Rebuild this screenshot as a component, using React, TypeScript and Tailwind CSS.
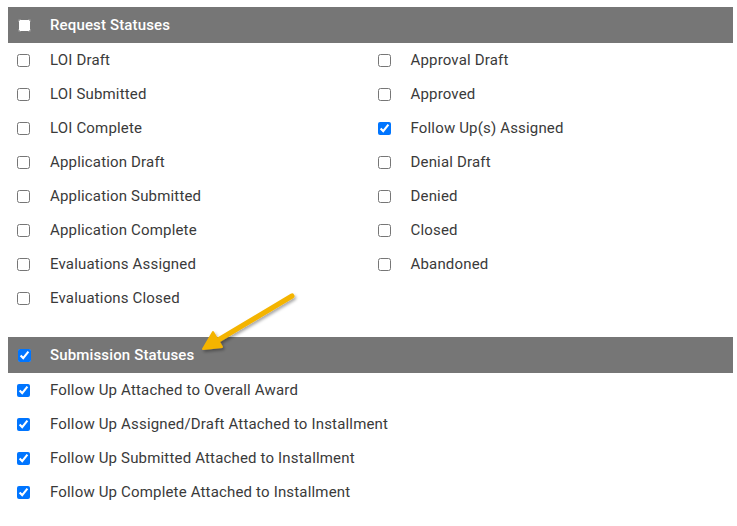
import React from 'react'

const requestLeft = [
  'LOI Draft',
  'LOI Submitted',
  'LOI Complete',
  'Application Draft',
  'Application Submitted',
  'Application Complete',
  'Evaluations Assigned',
  'Evaluations Closed',
]

const requestRight = [
  { label: 'Approval Draft', checked: false },
  { label: 'Approved', checked: false },
  { label: 'Follow Up(s) Assigned', checked: true },
  { label: 'Denial Draft', checked: false },
  { label: 'Denied', checked: false },
  { label: 'Closed', checked: false },
  { label: 'Abandoned', checked: false },
]

const submission = [
  'Follow Up Attached to Overall Award',
  'Follow Up Assigned/Draft Attached to Installment',
  'Follow Up Submitted Attached to Installment',
  'Follow Up Complete Attached to Installment',
]

const Row: React.FC<{ label: string; checked?: boolean }> = ({ label, checked }) => (
  <label className="flex h-[34px] items-center">
    <input type="checkbox" defaultChecked={checked} className="h-[13px] w-[13px] shrink-0" />
    <span className="ml-[20px] text-[15px] tracking-[0.17px] text-[#3a3a3a]">{label}</span>
  </label>
)

const Header: React.FC<{ title: string; checked?: boolean }> = ({ title, checked }) => (
  <div className="flex h-[36px] items-center bg-[#767676] pl-[10px]">
    <input type="checkbox" defaultChecked={checked} className="h-[13px] w-[13px] shrink-0" />
    <span className="ml-[19px] text-[15px] font-medium tracking-[0.15px] text-white">{title}</span>
  </div>
)

export default function App() {
  return (
    <div className="relative h-[526px] w-[737px] bg-white pl-2 pr-1 pt-[7px] font-['Roboto',sans-serif]">
      <Header title="Request Statuses" />
      <div className="grid grid-cols-2">
        <div className="pl-[9px]">
          {requestLeft.map((l) => (
            <Row key={l} label={l} />
          ))}
        </div>
        <div className="pl-[7px]">
          {requestRight.map((r) => (
            <Row key={r.label} label={r.label} checked={r.checked} />
          ))}
        </div>
      </div>
      <div className="h-[22px]" />
      <Header title="Submission Statuses" checked />
      <div className="pl-[9px]">
        {submission.map((s) => (
          <Row key={s} label={s} checked />
        ))}
      </div>

      <svg className="pointer-events-none absolute left-0 top-0" width="737" height="526">
        <defs>
          <filter id="sh" x="-20%" y="-20%" width="140%" height="140%">
            <feDropShadow dx="1.5" dy="2" stdDeviation="1.5" floodColor="#000" floodOpacity="0.35" />
          </filter>
        </defs>
        <g filter="url(#sh)">
          <line x1="292" y1="296" x2="215" y2="342" stroke="#F4B400" strokeWidth="5" strokeLinecap="round" />
          <polygon points="203,349 213,332 222,347" fill="#F4B400" stroke="#F4B400" strokeWidth="2" strokeLinejoin="round" />
        </g>
      </svg>
    </div>
  )
}
